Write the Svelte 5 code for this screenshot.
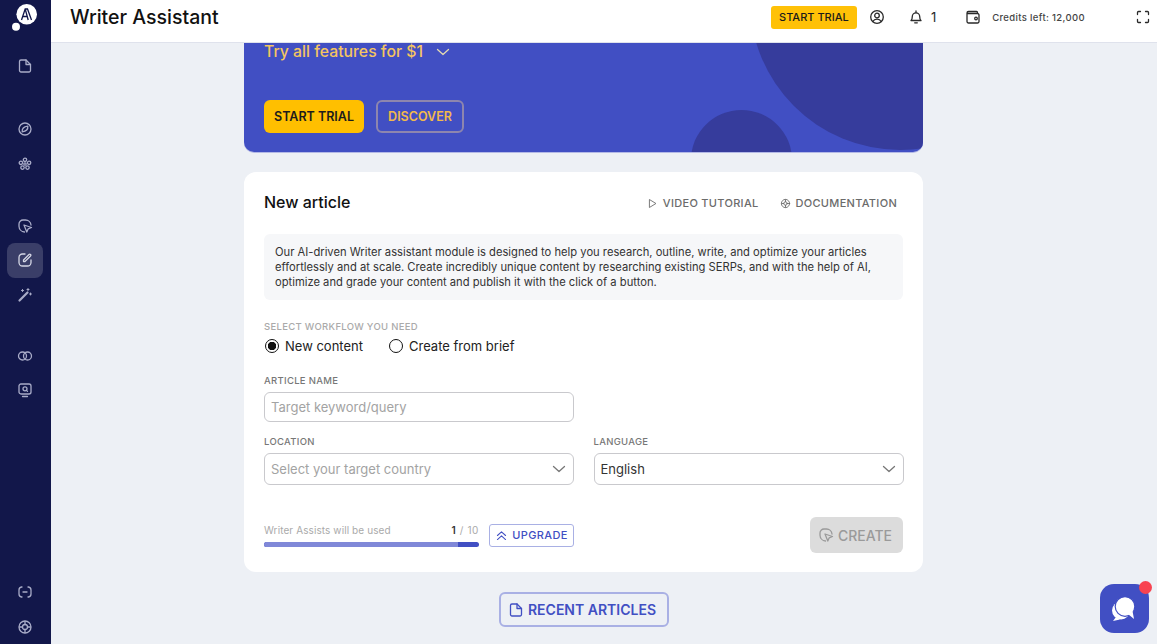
<script>
	let workflow = $state('new');
	const groups = [
		['doc'],
		['compass', 'flower'],
		['cursor', 'edit', 'wand'],
		['rings', 'monitor'],
	];
</script>

{#snippet icon(name)}
	<svg class="ico" viewBox="0 0 16 16" fill="none" stroke="currentColor" stroke-width="1.3" stroke-linecap="round" stroke-linejoin="round">
		{#if name === 'doc'}
			<path d="M2.5 3.5a1.5 1.5 0 0 1 1.5-1.5h5l4.5 4.5V12.500a1.500 1.500 0 0 1-1.500 1.500H4a1.500 1.500 0 0 1-1.500-1.500z" /><path d="M9 2v4.500h4.500" />
		{:else if name === 'compass'}
			<circle cx="8" cy="8" r="6" /><path d="M10.800 5.200c.3 2.600-1.500 5-5.600 5.600c-.3-2.600 1.500-5 5.600-5.600z" />
		{:else if name === 'flower'}
			<circle cx="8" cy="8" r="1.200" /><circle cx="8" cy="3.800" r="1.700" /><circle cx="12.100" cy="6.800" r="1.700" /><circle cx="10.500" cy="11.600" r="1.700" /><circle cx="5.500" cy="11.600" r="1.700" /><circle cx="3.900" cy="6.800" r="1.700" />
		{:else if name === 'cursor'}
			<path d="M7.500 14A6 6 0 0 1 2 8.200V6a4 4 0 0 1 4-4h2.500A5.500 5.500 0 0 1 14 7" /><path d="M7 7l7.500 2.500l-3.300 1.300l-1.400 3.200z" />
		{:else if name === 'edit'}
			<path d="M8 2H5.500A3.500 3.500 0 0 0 2 5.500v5A3.500 3.500 0 0 0 5.500 14h5a3.500 3.500 0 0 0 3.500-3.500V8" /><path d="M6.500 9.500V8l5.500-5.500a1 1 0 0 1 1.500 1.500L8 9.500z" />
		{:else if name === 'wand'}
			<path d="M2.500 13.500l8-8" stroke-width="2.200" /><path d="M11 1.500v2M10 2.500h2M13.500 6v2M12.500 7h2M5.500 2.500v2M4.500 3.500h2" stroke-width="1" />
		{:else if name === 'rings'}
			<circle cx="5.500" cy="8" r="4" /><circle cx="10.500" cy="8" r="4" />
		{:else if name === 'monitor'}
			<rect x="2" y="2" width="12" height="10" rx="2" /><circle cx="8" cy="6.800" r="2" /><path d="M9.500 8.400l1 1M5.500 14.500h5" />
		{:else if name === 'code'}
			<path d="M5 3H4.500A3 3 0 0 0 2 6v4a3 3 0 0 0 2.500 3H5M11 3h.5A3 3 0 0 1 14 6v4a3 3 0 0 1-2.500 3H11M6 8h4" />
		{:else if name === 'help'}
			<circle cx="8" cy="8" r="6" /><circle cx="8" cy="8" r="2.500" /><path d="M2.500 8h3M10.500 8h3M8 2.500v3M8 10.500v3" />
		{:else if name === 'user'}
			<circle cx="8" cy="8" r="6.300" /><circle cx="8" cy="6.500" r="2.300" /><path d="M3.800 12.500c1-1.700 2.400-2.300 4.200-2.300s3.200.6 4.200 2.300" />
		{:else if name === 'bell'}
			<path d="M3 11.500c1.200-1 1.300-2.300 1.300-4a3.700 3.700 0 0 1 7.400 0c0 1.700.1 3 1.300 4z" /><path d="M8 2v1.500M6.700 13.800h2.600" />
		{:else if name === 'wallet'}
			<path d="M12.500 4.500V3.500a1 1 0 0 0-1-1H3.500a1.500 1.500 0 0 0-1.500 1.500v8.500A1.500 1.500 0 0 0 3.500 14h9a1.500 1.500 0 0 0 1.500-1.500V6a1.500 1.500 0 0 0-1.500-1.500H2.500" /><circle cx="11" cy="9.500" r="1.300" />
		{:else if name === 'expand'}
			<path d="M2.500 5.500V3.500a1 1 0 0 1 1-1h2M10.500 2.500h2a1 1 0 0 1 1 1v2M13.500 10.500v2a1 1 0 0 1-1 1h-2M5.500 13.500h-2a1 1 0 0 1-1-1v-2" />
		{:else if name === 'play'}
			<path d="M4 2.500l9 5.500l-9 5.500z" />
		{:else if name === 'chevron'}
			<path d="M2.500 5.500L8 10.500l5.500-5" />
		{:else if name === 'up'}
			<path d="M3 8L8 3.500L13 8M3 13l5-4.500l5 4.500" />
		{/if}
	</svg>
{/snippet}

<div class="shell">
	<aside class="sidebar">
		<div class="logo">
			<svg viewBox="0 0 30 32" width="30" height="32">
				<circle cx="18.700" cy="14.300" r="10.300" fill="#fff" />
				<circle cx="8" cy="26.700" r="4" fill="#fff" />
				<path d="M13.500 20l3.700-11h2.300l4 11M17.200 9l3 11M14.800 16.500h4.200" fill="none" stroke="#12174a" stroke-width="1.300" />
			</svg>
		</div>
		{#each groups as group}
			<div class="nav-group">
				{#each group as name}
					<div class="nav-item" class:active={name === 'edit'}>{@render icon(name)}</div>
				{/each}
			</div>
		{/each}
		<div class="nav-group bottom">
			<div class="nav-item">{@render icon('code')}</div>
			<div class="nav-item">{@render icon('help')}</div>
		</div>
	</aside>

	<div class="body">
		<header class="topbar">
			<h1>Writer Assistant</h1>
			<div class="top-actions">
				<button class="trial-small">START TRIAL</button>
				<span class="top-icon user">{@render icon('user')}</span>
				<span class="top-icon bell">{@render icon('bell')}<b>1</b></span>
				<span class="top-icon wallet">{@render icon('wallet')}</span>
				<span class="credits">Credits left: 12,000</span>
				<span class="top-icon expand">{@render icon('expand')}</span>
			</div>
		</header>

		<main class="main">
			<section class="banner">
				<div class="blob big"></div>
				<div class="blob small"></div>
				<div class="banner-title">Try all features for $1 <span class="banner-chev">{@render icon('chevron')}</span></div>
				<div class="banner-actions">
					<button class="trial">START TRIAL</button>
					<button class="discover">DISCOVER</button>
				</div>
			</section>

			<section class="card">
				<div class="card-head">
					<h2>New article</h2>
					<div class="links">
						<span class="link">{@render icon('play')}VIDEO TUTORIAL</span>
						<span class="link">{@render icon('help')}DOCUMENTATION</span>
					</div>
				</div>

				<p class="intro">Our AI-driven Writer assistant module is designed to help you research, outline, write, and optimize your articles effortlessly and at scale. Create incredibly unique content by researching existing SERPs, and with the help of AI, optimize and grade your content and publish it with the click of a button.</p>

				<div class="label light">SELECT WORKFLOW YOU NEED</div>
				<div class="radios">
					<button class="radio" onclick={() => (workflow = 'new')}>
						<span class="dot" class:on={workflow === 'new'}></span>New content
					</button>
					<button class="radio" onclick={() => (workflow = 'brief')}>
						<span class="dot" class:on={workflow === 'brief'}></span>Create from brief
					</button>
				</div>

				<div class="label name-label">ARTICLE NAME</div>
				<div class="half"><input class="field" placeholder="Target keyword/query" /></div>

				<div class="selects">
					<div>
						<div class="label">LOCATION</div>
						<div class="field select muted">Select your target country {@render icon('chevron')}</div>
					</div>
					<div>
						<div class="label">LANGUAGE</div>
						<div class="field select">English {@render icon('chevron')}</div>
					</div>
				</div>

				<div class="foot">
					<div class="usage">
						<div class="usage-text"><span>Writer Assists will be used</span><span class="count"><b>1</b> / 10</span></div>
						<div class="bar"><div class="bar-used" style="width: 90%"></div></div>
					</div>
					<button class="upgrade">{@render icon('up')}UPGRADE</button>
					<button class="create" disabled>{@render icon('cursor')}CREATE</button>
				</div>
			</section>

			<button class="recent">{@render icon('doc')}RECENT ARTICLES</button>
		</main>
	</div>

	<div class="chat">
		<svg viewBox="0 0 49 49" width="49" height="49">
			<circle cx="21" cy="26.500" r="9" fill="#fff" />
			<path d="M16 33l-3 4l7-1.500z" fill="#fff" />
			<circle cx="25" cy="22.500" r="9.800" fill="#fff" stroke="#414fc3" stroke-width="1.200" />
			<path d="M28 30l6 5l-1.500-8z" fill="#fff" />
		</svg>
		<span class="badge"></span>
	</div>
</div>

<style>
	:global(body) {
		margin: 0;
		font-family: "Inter", "Liberation Sans", sans-serif;
	}
	button {
		font-family: inherit;
		cursor: pointer;
	}
	.shell {
		display: flex;
		width: 1157px;
		height: 644px;
		overflow: hidden;
		background: #edf0f5;
		color: #111;
	}
	.ico {
		width: 16px;
		height: 16px;
		flex: none;
	}
	.sidebar {
		width: 51px;
		flex: none;
		box-sizing: border-box;
		padding-right: 1px;
		display: flex;
		flex-direction: column;
		align-items: center;
		background: #12174a;
		color: #a9acc8;
	}
	.logo {
		height: 49px;
		width: 100%;
		box-sizing: border-box;
		padding-left: 8px;
	}
	.logo svg {
		display: block;
	}
	.nav-group {
		display: flex;
		flex-direction: column;
		align-items: center;
		margin-bottom: 28px;
	}
	.nav-group:nth-child(2) { margin-bottom: 28.500px; }
	.nav-group:nth-child(3) { margin-bottom: 27.500px; }
	.nav-group:nth-child(4) { margin-bottom: 26.500px; }
	.nav-group.bottom {
		margin-top: auto;
		margin-bottom: 0;
	}
	.nav-item {
		width: 36px;
		height: 34.500px;
		display: flex;
		align-items: center;
		justify-content: center;
		border-radius: 8px;
	}
	.nav-item.active {
		background: #3a3e68;
		color: #d5d7e5;
	}
	.body {
		flex: 1;
		display: flex;
		flex-direction: column;
		min-width: 0;
	}
	.topbar {
		height: 43px;
		flex: none;
		box-sizing: border-box;
		display: flex;
		align-items: center;
		justify-content: space-between;
		padding: 0 6px 8px 19px;
		background: #fff;
		border-bottom: 1px solid #dfe2ec;
	}
	h1 {
		margin: 0;
		font-size: 19.500px;
		font-weight: 500;
		color: #111;
	}
	.top-actions {
		display: flex;
		align-items: center;
		color: #2a2a2a;
	}
	.trial-small {
		width: 86px;
		height: 23px;
		padding: 0;
		border: 0;
		border-radius: 3px;
		background: #ffc107;
		font-size: 11px;
		font-weight: 500;
		color: #1a1a1a;
	}
	.top-icon {
		display: flex;
		align-items: center;
	}
	.user { margin-left: 12px; }
	.bell { margin-left: 23px; gap: 7px; }
	.bell b {
		font-size: 13px;
		font-weight: 400;
	}
	.wallet { margin-left: 29px; }
	.credits {
		margin-left: 11px;
		font-size: 9.500px;
		font-weight: 500;
		letter-spacing: .35px;
		color: #444;
	}
	.expand { margin-left: 50px; }
	.main {
		flex: 1;
		display: flex;
		flex-direction: column;
		align-items: flex-start;
		padding-left: 193px;
		overflow: hidden;
	}
	.banner {
		position: relative;
		width: 679px;
		height: 109px;
		flex: none;
		box-sizing: border-box;
		padding: 1px 0 0 20px;
		overflow: hidden;
		background: #414fc3;
		border-radius: 0 0 10px 10px;
		box-shadow: 0 1px 0 #b4b9e6;
	}
	.blob {
		position: absolute;
		background: #363c9c;
		border-radius: 50%;
	}
	.blob.big {
		left: 506px;
		top: -193px;
		width: 300px;
		height: 300px;
	}
	.blob.small {
		left: 447px;
		top: 67px;
		width: 101px;
		height: 100px;
	}
	.banner-title {
		position: relative;
		display: flex;
		align-items: center;
		gap: 5px;
		height: 16px;
		font-size: 15.800px;
		line-height: 16px;
		font-weight: 500;
		color: #f4c561;
	}
	.banner-chev {
		display: flex;
		margin-left: 7px;
		color: #e3d9b0;
	}
	.banner-actions {
		position: relative;
		display: flex;
		gap: 12px;
		margin-top: 40px;
	}
	.trial, .discover {
		height: 33px;
		padding: 0;
		border-radius: 6px;
		font-size: 12.500px;
		font-weight: 600;
	}
	.trial {
		width: 100px;
		border: 0;
		background: #ffbf00;
		color: #1c1c1c;
	}
	.discover {
		width: 88px;
		background: transparent;
		border: 2px solid #8d86ae;
		color: #f1b94c;
	}
	.card {
		width: 679px;
		height: 400px;
		flex: none;
		box-sizing: border-box;
		margin-top: 20px;
		padding: 0 20px;
		background: #fff;
		border-radius: 12px;
	}
	.card-head {
		display: flex;
		align-items: center;
		justify-content: space-between;
		height: 60px;
		padding-right: 6px;
	}
	h2 {
		margin: 0;
		font-size: 16px;
		font-weight: 500;
	}
	.links {
		display: flex;
		gap: 21px;
		padding-top: 2px;
	}
	.link {
		display: flex;
		align-items: center;
		gap: 5px;
		font-size: 11px;
		font-weight: 500;
		letter-spacing: .3px;
		color: #6b6b6b;
	}
	.link .ico {
		width: 11px;
		height: 11px;
	}
	.intro {
		margin: 2px 0 0;
		padding: 11px;
		height: 66px;
		box-sizing: border-box;
		background: #f6f7f9;
		border-radius: 6px;
		font-size: 11.200px;
		line-height: 14.800px;
		color: #333;
	}
	.label {
		font-size: 9.500px;
		font-weight: 500;
		line-height: 12px;
		letter-spacing: .3px;
		color: #777;
	}
	.label.light {
		margin-top: 21px;
		color: #aaa;
	}
	.radios {
		display: flex;
		gap: 25px;
		margin-top: 5px;
	}
	.radio {
		display: flex;
		align-items: center;
		gap: 6px;
		padding: 0 0 0 1px;
		border: 0;
		background: none;
		font-size: 13px;
		color: #222;
	}
	.dot {
		width: 14px;
		height: 14px;
		box-sizing: border-box;
		border: 1.500px solid #111;
		border-radius: 50%;
		background: #fff;
	}
	.dot.on {
		background: radial-gradient(circle, #111 0 4px, #fff 4.500px);
	}
	.name-label {
		margin-top: 21px;
	}
	.half {
		width: 310px;
		margin-top: 5px;
	}
	.field {
		display: block;
		width: 100%;
		box-sizing: border-box;
		height: 30px;
		padding: 0 6px;
		border: 1px solid #c9c9cd;
		border-radius: 6px;
		font-family: inherit;
		font-size: 13px;
		color: #333;
		background: #fff;
	}
	.field::placeholder {
		color: #a3a3a3;
	}
	.selects {
		display: grid;
		grid-template-columns: 310px 310px;
		gap: 19.500px;
		margin-top: 14px;
	}
	.select {
		display: flex;
		align-items: center;
		justify-content: space-between;
		height: 32px;
		margin-top: 5px;
	}
	.select .ico {
		color: #777;
	}
	.muted {
		color: #a3a3a3;
	}
	.foot {
		display: flex;
		align-items: center;
		margin-top: 32px;
	}
	.usage {
		width: 215px;
	}
	.usage-text {
		display: flex;
		justify-content: space-between;
		font-size: 10px;
		letter-spacing: .1px;
		color: #aaa;
	}
	.count {
		letter-spacing: .6px;
	}
	.count b {
		color: #333;
		font-weight: 600;
	}
	.bar {
		height: 5px;
		margin-top: 6px;
		background: #414fc3;
		border-radius: 3px;
		overflow: hidden;
	}
	.bar-used {
		height: 100%;
		background: #8088d8;
	}
	.upgrade {
		display: flex;
		align-items: center;
		justify-content: center;
		gap: 4px;
		width: 85px;
		height: 23px;
		margin-left: 10px;
		padding: 0;
		background: #fff;
		border: 1px solid #a9b0e4;
		border-radius: 3px;
		font-size: 11px;
		font-weight: 500;
		letter-spacing: .4px;
		color: #414fc3;
	}
	.upgrade .ico {
		width: 13px;
		height: 13px;
	}
	.create {
		display: flex;
		align-items: center;
		justify-content: center;
		gap: 4px;
		width: 93px;
		height: 36px;
		margin-left: auto;
		padding: 0 3px 0 0;
		border: 0;
		border-radius: 6px;
		background: #dcdcdc;
		font-size: 14px;
		font-weight: 500;
		color: #9a9a9a;
	}
	.recent {
		display: flex;
		align-items: center;
		justify-content: center;
		gap: 4px;
		width: 170px;
		height: 35px;
		margin: 20px 0 0 255px;
		padding: 0 4px 0 0;
		background: #edf0f5;
		border: 2px solid #a9b0e4;
		border-radius: 6px;
		font-size: 14px;
		font-weight: 600;
		color: #414fc3;
	}
	.chat {
		position: fixed;
		left: 1100px;
		top: 584px;
		width: 49px;
		height: 49px;
		border-radius: 14px;
		background: #414fc3;
	}
	.chat svg {
		display: block;
	}
	.badge {
		position: absolute;
		right: -3px;
		top: -3px;
		width: 13px;
		height: 13px;
		border-radius: 50%;
		background: #f84350;
	}
</style>
